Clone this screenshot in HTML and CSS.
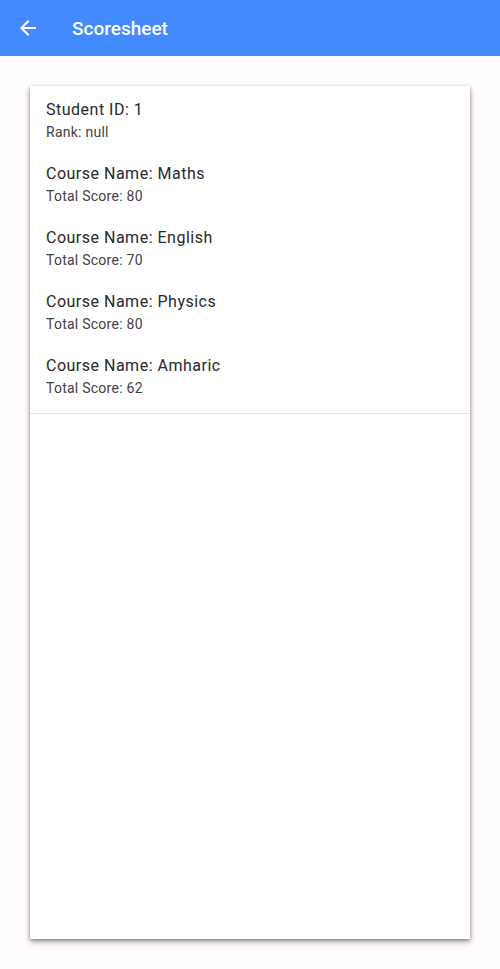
FILE: index.html
```html
<!DOCTYPE html>
<html>
<head>
<meta charset="utf-8">
<link rel="stylesheet" href="styles.css">
</head>
<body>
<header class="appbar">
  <button class="back" aria-label="Back">
    <svg width="24" height="24" viewBox="0 0 24 24"><path d="M20 11H7.83l5.59-5.59L12 4l-8 8 8 8 1.41-1.41L7.83 13H20v-2z" fill="#fff"/></svg>
  </button>
  <h1 class="title">Scoresheet</h1>
</header>
<main class="content">
  <section class="card">
    <div class="tile"><div class="t1">Student ID: 1</div><div class="t2">Rank: null</div></div>
    <div class="tile"><div class="t1">Course Name: Maths</div><div class="t2">Total Score: 80</div></div>
    <div class="tile"><div class="t1">Course Name: English</div><div class="t2">Total Score: 70</div></div>
    <div class="tile"><div class="t1">Course Name: Physics</div><div class="t2">Total Score: 80</div></div>
    <div class="tile"><div class="t1">Course Name: Amharic</div><div class="t2">Total Score: 62</div></div>
    <div class="divider"></div>
  </section>
</main>
</body>
</html>
```
FILE: styles.css
```css
* { box-sizing: border-box; }
html, body { margin: 0; padding: 0; }
body {
  width: 500px;
  height: 969px;
  background: #fffbfe;
  font-family: Roboto, "Noto Sans", sans-serif;
  display: flex;
  flex-direction: column;
  overflow: hidden;
}
.appbar {
  height: 56px;
  background: #448aff;
  display: flex;
  align-items: center;
  flex-shrink: 0;
}
.back {
  width: 56px;
  height: 56px;
  border: 0;
  background: none;
  padding: 0 0 0 16px;
  display: flex;
  align-items: center;
}
.title {
  margin: 0 0 0 16px;
  color: #fff;
  font-size: 19px;
  font-weight: 500;
  line-height: 1;
  letter-spacing: 0;
}
.content {
  flex: 1;
  padding: 30px;
  display: flex;
}
.card {
  flex: 1;
  background: #fff;
  box-shadow: 0 3px 6px rgba(0,0,0,0.35), 0 1px 3px rgba(0,0,0,0.25);
  display: flex;
  flex-direction: column;
}
.tile {
  height: 64px;
  padding: 12px 16px 8px;
  display: flex;
  flex-direction: column;
}
.t1 {
  font-size: 16px;
  line-height: 24px;
  letter-spacing: 0.5px;
  color: #2a282d;
}
.t2 {
  font-size: 14px;
  line-height: 20px;
  letter-spacing: 0.25px;
  color: #444248;
}
.divider {
  height: 1px;
  margin-top: 7px;
  background: #e0dde3;
}
```
